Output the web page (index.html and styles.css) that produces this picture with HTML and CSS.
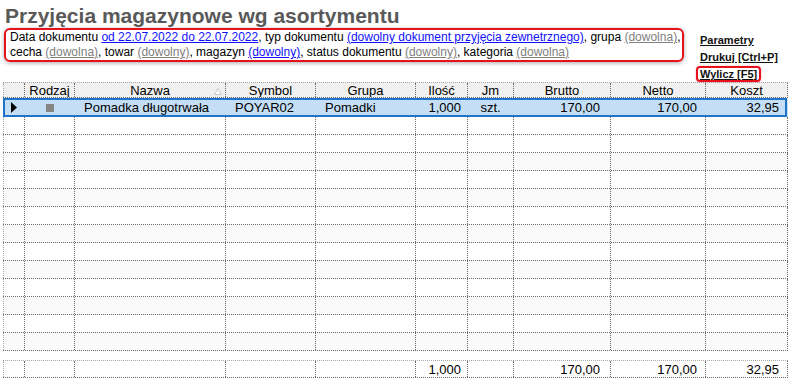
FILE: index.html
```html
<!DOCTYPE html>
<html lang="pl">
<head>
  <meta charset="UTF-8" />
  <title>Przyjęcia magazynowe wg asortymentu</title>
  <link rel="stylesheet" href="styles.css">
</head>
<body>
  <div class="top">
    <div class="top-left">
      <h1 class="title">Przyjęcia magazynowe wg asortymentu</h1>
      <div class="filters">
        Data dokumentu <a class="lnk">od 22.07.2022 do 22.07.2022</a>, typ dokumentu <a class="lnk">(dowolny dokument przyjęcia zewnetrznego)</a>, grupa <a class="lnk off">(dowolna)</a>,<br>
        cecha <a class="lnk off">(dowolna)</a>, towar <a class="lnk off">(dowolny)</a>, magazyn <a class="lnk">(dowolny)</a>, status dokumentu <a class="lnk off">(dowolny)</a>, kategoria <a class="lnk off">(dowolna)</a>
      </div>
    </div>
    <div class="actions">
      <a class="action">Parametry</a>
      <a class="action">Drukuj [Ctrl+P]</a>
      <a class="action boxed">Wylicz [F5]</a>
    </div>
  </div>

  <div class="grid" id="grid">
    <div class="row head">
      <div class="cell"></div>
      <div class="cell c">Rodzaj</div>
      <div class="cell c sortable">Nazwa
        <svg class="sort" width="8" height="7" viewBox="0 0 8 7"><polygon points="4,0.5 7.5,6.5 0.5,6.5" fill="#fff" stroke="#c8c8c8" stroke-width="1"/></svg>
      </div>
      <div class="cell c">Symbol</div>
      <div class="cell c">Grupa</div>
      <div class="cell c">Ilość</div>
      <div class="cell c">Jm</div>
      <div class="cell c">Brutto</div>
      <div class="cell c">Netto</div>
      <div class="cell c">Koszt</div>
    </div>
    <div class="row sel">
      <div class="cell c">
        <svg width="7" height="11" viewBox="0 0 7 11"><polygon points="0,0 6,5.5 0,11" fill="#000"/></svg>
      </div>
      <div class="cell c"><span class="kind"></span></div>
      <div class="cell l">Pomadka długotrwała</div>
      <div class="cell l">POYAR02</div>
      <div class="cell l">Pomadki</div>
      <div class="cell r q">1,000</div>
      <div class="cell c">szt.</div>
      <div class="cell r b">170,00</div>
      <div class="cell r n">170,00</div>
      <div class="cell r k">32,95</div>
    </div>
  </div>

  <div class="row totals">
    <div class="cell"></div>
    <div class="cell"></div>
    <div class="cell"></div>
    <div class="cell"></div>
    <div class="cell"></div>
    <div class="cell r q">1,000</div>
    <div class="cell"></div>
    <div class="cell r b">170,00</div>
    <div class="cell r n">170,00</div>
    <div class="cell r k">32,95</div>
  </div>

  <script>
    // puste wiersze siatki
    const grid = document.getElementById('grid');
    for (let i = 0; i < 13; i++) {
      const row = document.createElement('div');
      row.className = 'row';
      for (let j = 0; j < 10; j++) {
        const cell = document.createElement('div');
        cell.className = 'cell';
        row.appendChild(cell);
      }
      grid.appendChild(row);
    }
  </script>
</body>
</html>
```

FILE: styles.css
```css
* {
  margin: 0;
  padding: 0;
  box-sizing: border-box;
}

body {
  font-family: 'Liberation Sans', Arial, sans-serif;
  background: #fff;
  color: #000;
}

.top {
  display: flex;
  height: 82px;
}

.top-left {
  padding-top: 4px;
}

.title {
  margin-left: 5px;
  font-size: 21px;
  line-height: 24px;
  font-weight: 700;
  color: #595959;
  white-space: nowrap;
}

.filters {
  margin-left: 4px;
  width: 680px;
  padding: 0 4px;
  border: 2px solid #e8101c;
  border-radius: 6px;
  box-shadow: 0 1px 4px rgba(0,0,0,0.35);
  font-size: 12px;
  line-height: 15px;
  white-space: nowrap;
}

.lnk {
  color: #1010ff;
  text-decoration: underline;
}

.lnk.off {
  color: #808080;
}

.actions {
  display: flex;
  flex-direction: column;
  align-items: flex-start;
  margin-left: 16px;
  padding-top: 32px;
}

.action {
  font-size: 11px;
  line-height: 17px;
  font-weight: 700;
  color: #111;
  text-decoration: underline;
  white-space: nowrap;
}

.action.boxed {
  margin-left: -4px;
  padding: 0 2px;
  line-height: 12px;
  border: 2px solid #e8101c;
  border-radius: 4px;
  box-shadow: 0 0 2px rgba(232,16,28,0.4);
}

.grid {
  margin-left: 3px;
}

.row {
  display: grid;
  grid-template-columns: 21px 50px 151px 90px 100px 52px 46px 97px 95px 82px;
  width: 785px;
  height: 18px;
  border-right: 1px dotted #6a6a6a;
  border-bottom: 1px dotted #6a6a6a;
  font-size: 13px;
}

.grid .row:nth-child(2n+5) {
  background: #fafafa;
}

.cell {
  display: flex;
  align-items: center;
  border-left: 1px dotted #6a6a6a;
  white-space: nowrap;
  overflow: hidden;
}

.cell:first-child {
  border-left-color: #a8a8a8;
}

.cell.c { justify-content: center; }
.cell.l { padding-left: 9px; }
.cell.r { justify-content: flex-end; }
.cell.q { padding-right: 6px; }
.cell.b { padding-right: 10px; }
.cell.n { padding-right: 8px; }
.cell.k { padding-right: 8px; }

.row.head {
  height: 16px;
  border-top: 1px dotted #a8a8a8;
  background: #f0f0f0;
}

.sortable {
  position: relative;
}

.sort {
  position: absolute;
  right: 3px;
  top: 5px;
}

.row.sel {
  height: 19px;
  border-bottom: none;
  border-right-color: transparent;
  background: #c3def5;
  box-shadow: inset 0 0 0 2px #1f74c9;
}

.row.sel .cell {
  border-left-color: transparent;
}

.kind {
  width: 8px;
  height: 8px;
  background: #858585;
}

.row.totals {
  margin-left: 3px;
  margin-top: 9px;
  border-top: 1px dotted #a8a8a8;
}
```
